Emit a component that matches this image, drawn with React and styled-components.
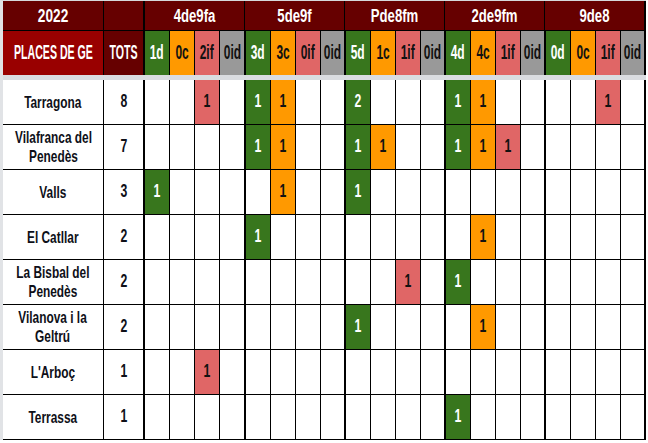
import React from 'react';
import styled, { createGlobalStyle, css } from 'styled-components';

const Global = createGlobalStyle`
  html, body { margin: 0; padding: 0; background: #ffffff; }
  body { font-family: "Liberation Sans", Arial, sans-serif; }
`;

const COLORS = {
  d: '#38761d',
  c: '#ff9900',
  if: '#e06666',
  id: '#999999',
};
const KINDS = ['d', 'c', 'if', 'id'];

const groups = [
  { name: '4de9fa', labels: ['1d', '0c', '2if', '0id'] },
  { name: '5de9f', labels: ['3d', '3c', '0if', '0id'] },
  { name: 'Pde8fm', labels: ['5d', '1c', '1if', '0id'] },
  { name: '2de9fm', labels: ['4d', '4c', '1if', '0id'] },
  { name: '9de8', labels: ['0d', '0c', '1if', '0id'] },
];

const n = null;
const rows = [
  { name: ['Tarragona'], total: 8, v: [n, n, 1, n, 1, 1, n, n, 2, n, n, n, 1, 1, n, n, n, n, 1, n] },
  { name: ['Vilafranca del', 'Penedès'], total: 7, v: [n, n, n, n, 1, 1, n, n, 1, 1, n, n, 1, 1, 1, n, n, n, n, n] },
  { name: ['Valls'], total: 3, v: [1, n, n, n, n, 1, n, n, 1, n, n, n, n, n, n, n, n, n, n, n] },
  { name: ['El Catllar'], total: 2, v: [n, n, n, n, 1, n, n, n, n, n, n, n, n, 1, n, n, n, n, n, n] },
  { name: ['La Bisbal del', 'Penedès'], total: 2, v: [n, n, n, n, n, n, n, n, n, n, 1, n, 1, n, n, n, n, n, n, n] },
  { name: ['Vilanova i la', 'Geltrú'], total: 2, v: [n, n, n, n, n, n, n, n, 1, n, n, n, n, 1, n, n, n, n, n, n] },
  { name: ["L'Arboç"], total: 1, v: [n, n, 1, n, n, n, n, n, n, n, n, n, n, n, n, n, n, n, n, n] },
  { name: ['Terrassa'], total: 1, v: [n, n, n, n, n, n, n, n, n, n, n, n, 1, n, n, n, n, n, n, n] },
];

const Sheet = styled.div`
  display: grid;
  grid-template-columns:
    100px 40px
    26px 25px 25px 25px
    26px 25px 25px 24px
    26px 25px 25px 24px
    26px 25px 25px 24px
    26px 25px 25px 26px;
  width: max-content;
  border-left: 3px solid #e1e3e6;
  border-top: 1px solid #d6d8db;
  font-family: "Liberation Sans", Arial, sans-serif;
  font-weight: 700;
`;

const edgeCss = css`
  border-left: ${(p) => (p.$edge === 'thick' ? '2px solid #000' : p.$edge === 'thin' ? '1px solid #000' : '0')};
  border-right: ${(p) => (p.$last ? '2px solid #000' : '0')};
`;

const BaseCell = styled.div`
  box-sizing: border-box;
  min-width: 0;
  display: flex;
  align-items: center;
  justify-content: center;
  overflow: visible;
  ${edgeCss}
`;

const TopCell = styled(BaseCell)`
  grid-column: span ${(p) => p.$span || 1};
  height: 30px;
  background: #660000;
  color: #ffffff;
  border-bottom: 1px solid #000;
`;

const SubCell = styled(BaseCell)`
  height: 44px;
  padding-bottom: 3px;
  background: ${(p) => p.$bg};
  color: ${(p) => p.$fg};
`;

const Band = styled.div`
  grid-column: 1 / -1;
  height: 5px;
  background: #dadce0;
`;

const BodyCell = styled(BaseCell)`
  height: 45px;
  border-bottom: 1px solid #000;
  background: ${(p) => p.$bg || '#ffffff'};
  color: ${(p) => p.$fg || '#0e1018'};
`;

const Label = styled.span`
  display: inline-block;
  white-space: nowrap;
  text-align: center;
  font-size: ${(p) => p.$size}px;
  line-height: ${(p) => p.$lh || p.$size + 2}px;
  transform: scaleX(${(p) => p.$sx});
  transform-origin: center;
`;

function kindColors(k) {
  return { bg: COLORS[k], fg: k === 'd' ? '#ffffff' : '#111111' };
}

export default function App() {
  return (
    <>
      <Global />
      <Sheet>
        <TopCell $edge="none">
          <Label $size={18} $sx={0.76}>2022</Label>
        </TopCell>
        <TopCell $edge="thin" />
        {groups.map((g, gi) => (
          <TopCell key={g.name} $span={4} $edge={gi === 0 ? 'thick' : 'thin'} $last={gi === groups.length - 1}>
            <Label $size={18} $sx={0.73}>{g.name}</Label>
          </TopCell>
        ))}

        <SubCell $edge="none" $bg="#990000" $fg="#ffffff">
          <Label $size={20} $sx={0.53}>PLACES DE GE</Label>
        </SubCell>
        <SubCell $edge="thin" $bg="#660000" $fg="#ffffff">
          <Label $size={20} $sx={0.53}>TOTS</Label>
        </SubCell>
        {groups.map((g, gi) =>
          g.labels.map((l, li) => {
            const c = kindColors(KINDS[li]);
            return (
              <SubCell
                key={g.name + l + li}
                $edge={li === 0 ? 'thick' : 'thin'}
                $last={gi === groups.length - 1 && li === 3}
                $bg={c.bg}
                $fg={c.fg}
              >
                <Label $size={20} $sx={0.6}>{l}</Label>
              </SubCell>
            );
          })
        )}

        <Band />

        {rows.map((r) => (
          <React.Fragment key={r.name.join(' ')}>
            <BodyCell $edge="none">
              <Label $size={16.5} $lh={19} $sx={0.72}>
                {r.name.map((line, i) => (
                  <React.Fragment key={i}>
                    {i > 0 && <br />}
                    {line}
                  </React.Fragment>
                ))}
              </Label>
            </BodyCell>
            <BodyCell $edge="thin">
              <Label $size={17.5} $sx={0.7}>{r.total}</Label>
            </BodyCell>
            {r.v.map((val, i) => {
              const k = KINDS[i % 4];
              const c = val != null ? kindColors(k) : {};
              return (
                <BodyCell
                  key={i}
                  $edge={i % 4 === 0 ? 'thick' : 'thin'}
                  $last={i === 19}
                  $bg={c.bg}
                  $fg={c.fg}
                >
                  {val != null && <Label $size={17.5} $sx={0.7}>{val}</Label>}
                </BodyCell>
              );
            })}
          </React.Fragment>
        ))}
      </Sheet>
    </>
  );
}
